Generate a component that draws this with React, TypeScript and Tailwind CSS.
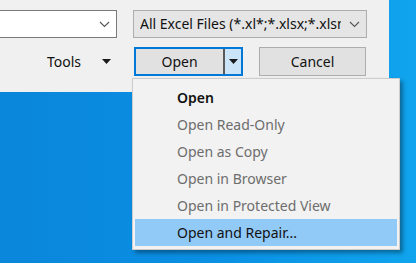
import React from "react";

const font = { fontFamily: '"Noto Sans", "Open Sans", sans-serif' };

function Chevron() {
  return (
    <svg width="11" height="7" viewBox="0 0 11 7" className="shrink-0">
      <path d="M1 1 L5.5 5.5 L10 1" fill="none" stroke="#555" strokeWidth="1.1" />
    </svg>
  );
}

function Caret({ color = "#1a1a1a" }: { color?: string }) {
  return (
    <svg width="9" height="5" viewBox="0 0 9 5">
      <path d="M0 0 H9 L4.5 5 Z" fill={color} />
    </svg>
  );
}

const items = [
  { label: "Open", bold: true },
  { label: "Open Read-Only", disabled: true },
  { label: "Open as Copy", disabled: true },
  { label: "Open in Browser", disabled: true },
  { label: "Open in Protected View", disabled: true },
  { label: "Open and Repair...", active: true },
];

export default function App() {
  return (
    <div
      className="relative w-[416px] h-[263px] overflow-hidden bg-gradient-to-r from-[#0a86da] via-[#0a8fe3] to-[#10a4ee] text-[14px]"
      style={font}
    >
      {/* dialog */}
      <div className="w-[389px] h-[92px] bg-[#f0f0f0] pt-[10px]">
        <div className="flex gap-[16px]">
          <div className="w-[117px] h-[28px] bg-white border border-[#7a7a7a] border-l-0 flex items-center justify-end pr-[6px]">
            <Chevron />
          </div>
          <div className="w-[234px] h-[28px] bg-[#e5e5e5] border border-[#adadad] flex items-center pl-[6px] pr-[6px] gap-[8px]">
            <span className="flex-1 overflow-hidden whitespace-nowrap text-[#111] leading-none">
              All Excel Files (*.xl*;*.xlsx;*.xlsm)
            </span>
            <Chevron />
          </div>
        </div>
        <div className="flex mt-[9px] h-[29px]">
          <div className="w-[134px] flex items-center justify-end pr-[23px] gap-[21px] text-[#111]">
            <span>Tools</span>
            <Caret />
          </div>
          <div className="w-[109px] border-2 border-[#0078d7] flex">
            <div className="flex-1 bg-[#e1e1e1] flex items-center justify-center text-[#111]">
              Open
            </div>
            <div className="w-[18px] bg-[#cce4f7] border-l-2 border-[#5a5a5a] flex items-center justify-center">
              <Caret />
            </div>
          </div>
          <div className="ml-[16px] w-[107px] bg-[#e1e1e1] border border-[#adadad] flex items-center justify-center text-[#111]">
            Cancel
          </div>
        </div>
      </div>

      {/* dropdown menu */}
      <div className="absolute left-[132px] top-[78px] w-[268px] bg-[#f2f2f2] border border-[#cccccc] pt-[5px] pb-[3px] px-[2px] shadow-[3px_3px_4px_rgba(0,0,0,0.35)]">
        {items.map((it) => (
          <div
            key={it.label}
            className={`h-[27px] flex items-center pl-[42px] whitespace-nowrap ${
              it.active ? "bg-[#91c9f7]" : ""
            } ${it.disabled ? "text-[#6d6d6d]" : "text-[#111]"} ${
              it.bold ? "font-semibold" : ""
            }`}
          >
            {it.label}
          </div>
        ))}
      </div>
    </div>
  );
}
